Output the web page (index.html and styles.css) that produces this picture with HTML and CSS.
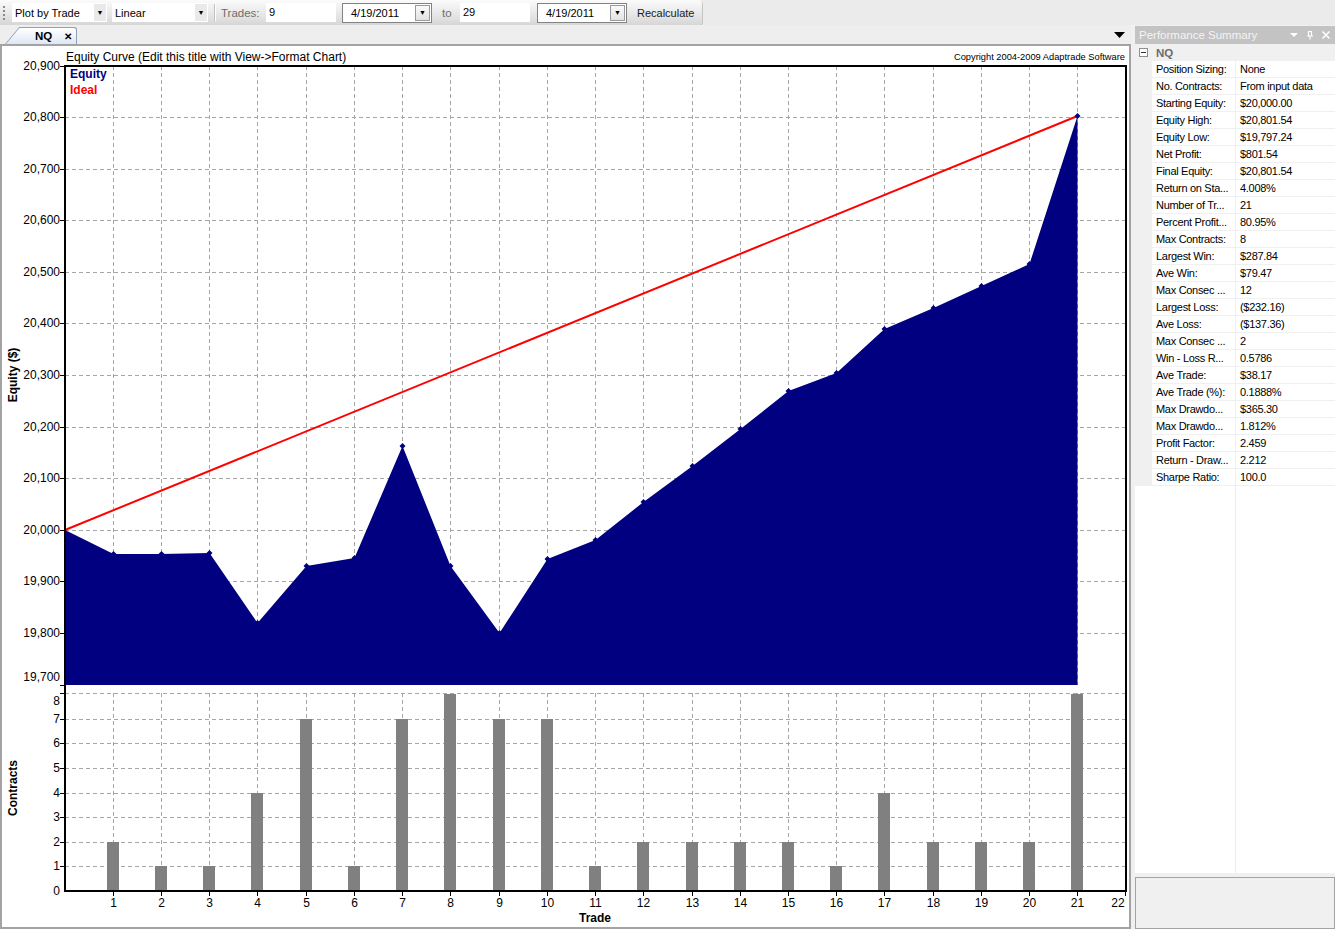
FILE: index.html
```html
<!DOCTYPE html>
<html>
<head>
<meta charset="utf-8">
<link rel="stylesheet" href="styles.css">
</head>
<body>
<div class="topbar">
  <div class="toolbar">
    <span class="grip"></span>
    <div class="combo c1"><span class="ctext">Plot by Trade</span><span class="carrow">▼</span></div>
    <div class="combo c2"><span class="ctext">Linear</span><span class="carrow">▼</span></div>
    <span class="tsep"></span>
    <span class="tlabel lab-trades">Trades:</span>
    <div class="tinput">9</div>
    <div class="dcombo d1"><span class="ctext">4/19/2011</span><span class="darrow">▼</span></div>
    <span class="tlabel lab-to">to</span>
    <div class="tinput">29</div>
    <div class="dcombo d2"><span class="ctext">4/19/2011</span><span class="darrow">▼</span></div>
    <span class="tbtn">Recalculate</span>
  </div>
</div>
<div class="main">
  <div class="doc">
    <div class="tabbar">
      <div class="tab"><span class="tabname">NQ</span><span class="tabx">✕</span></div>
      <svg class="tabmenu" width="11" height="7" viewBox="0 0 11 7"><path d="M0 0h11L5.5 6z" fill="#000"/></svg>
    </div>
    <div class="chartwrap">
      <svg class="chart" width="1127" height="880" viewBox="2 46 1127 880" xmlns="http://www.w3.org/2000/svg">
        <rect x="2" y="46" width="1127" height="880" fill="#fff"/>
        <text class="title" x="66" y="61">Equity Curve (Edit this title with View-&gt;Format Chart)</text>
        <text class="copy" x="1125" y="60" text-anchor="end">Copyright 2004-2009 Adaptrade Software</text>
        <!-- grid -->
        <path class="grid" d="M65 117.5H1126M65 169.5H1126M65 220.5H1126M65 272.5H1126M65 323.5H1126M65 375.5H1126M65 427.5H1126M65 478.5H1126M65 530.5H1126M65 581.5H1126M65 633.5H1126M65 693.5H1126M65 719.5H1126M65 743.5H1126M65 768.5H1126M65 793.5H1126M65 817.5H1126M65 842.5H1126M65 866.5H1126"/>
        <path class="grid" d="M113.5 66V685M161.5 66V685M209.5 66V685M257.5 66V685M306.5 66V685M354.5 66V685M402.5 66V685M450.5 66V685M499.5 66V685M547.5 66V685M595.5 66V685M643.5 66V685M692.5 66V685M740.5 66V685M788.5 66V685M836.5 66V685M884.5 66V685M933.5 66V685M981.5 66V685M1029.5 66V685M1077.5 66V685"/>
        <path class="grid" d="M113.5 693V891M161.5 693V891M209.5 693V891M257.5 693V891M306.5 693V891M354.5 693V891M402.5 693V891M450.5 693V891M499.5 693V891M547.5 693V891M595.5 693V891M643.5 693V891M692.5 693V891M740.5 693V891M788.5 693V891M836.5 693V891M884.5 693V891M933.5 693V891M981.5 693V891M1029.5 693V891M1077.5 693V891"/>
        <!-- equity fill -->
        <path fill="#000080" d="M65 685L65 530L113.5 554L161.5 554L209.5 553L257.5 623L306.5 566L354.5 558L402.5 446L450.5 566L499.5 633L547.5 559L595.5 540L643.5 502L692.5 466L740.5 429L788.5 391L836.5 373L884.5 329L933.5 308L981.5 286L1029.5 264L1077.5 116L1077.5 685Z"/>
        <!-- ideal -->
        <line x1="65" y1="530" x2="1077.5" y2="116" stroke="#ff0000" stroke-width="2"/>
        <!-- markers -->
        <path fill="#000080" d="M113.5 551l3 3-3 3-3-3zM161.5 551l3 3-3 3-3-3zM209.5 550l3 3-3 3-3-3zM257.5 620l3 3-3 3-3-3zM306.5 563l3 3-3 3-3-3zM354.5 555l3 3-3 3-3-3zM402.5 443l3 3-3 3-3-3zM450.5 563l3 3-3 3-3-3zM499.5 630l3 3-3 3-3-3zM547.5 556l3 3-3 3-3-3zM595.5 537l3 3-3 3-3-3zM643.5 499l3 3-3 3-3-3zM692.5 463l3 3-3 3-3-3zM740.5 426l3 3-3 3-3-3zM788.5 388l3 3-3 3-3-3zM836.5 370l3 3-3 3-3-3zM884.5 326l3 3-3 3-3-3zM933.5 305l3 3-3 3-3-3zM981.5 283l3 3-3 3-3-3zM1029.5 261l3 3-3 3-3-3zM1077.5 113l3 3-3 3-3-3z"/>
        <!-- bars -->
        <g fill="#808080">
          <rect x="107" y="842" width="12" height="49"/>
          <rect x="155" y="866" width="12" height="25"/>
          <rect x="203" y="866" width="12" height="25"/>
          <rect x="251" y="793" width="12" height="98"/>
          <rect x="300" y="719" width="12" height="172"/>
          <rect x="348" y="866" width="12" height="25"/>
          <rect x="396" y="719" width="12" height="172"/>
          <rect x="444" y="694" width="12" height="197"/>
          <rect x="493" y="719" width="12" height="172"/>
          <rect x="541" y="719" width="12" height="172"/>
          <rect x="589" y="866" width="12" height="25"/>
          <rect x="637" y="842" width="12" height="49"/>
          <rect x="686" y="842" width="12" height="49"/>
          <rect x="734" y="842" width="12" height="49"/>
          <rect x="782" y="842" width="12" height="49"/>
          <rect x="830" y="866" width="12" height="25"/>
          <rect x="878" y="793" width="12" height="98"/>
          <rect x="927" y="842" width="12" height="49"/>
          <rect x="975" y="842" width="12" height="49"/>
          <rect x="1023" y="842" width="12" height="49"/>
          <rect x="1071" y="694" width="12" height="197"/>
        </g>
        <!-- axes -->
        <path class="axis" d="M65 65V892M64 66H1127M1126 65V892M64 891H1127"/>
        <path class="tick" d="M60 66.5H65M60 117.5H65M60 169.5H65M60 220.5H65M60 272.5H65M60 323.5H65M60 375.5H65M60 427.5H65M60 478.5H65M60 530.5H65M60 581.5H65M60 633.5H65M60 685.5H65M60 693.5H65M60 719.5H65M60 743.5H65M60 768.5H65M60 793.5H65M60 817.5H65M60 842.5H65M60 866.5H65M113.5 891V896M161.5 891V896M209.5 891V896M257.5 891V896M306.5 891V896M354.5 891V896M402.5 891V896M450.5 891V896M499.5 891V896M547.5 891V896M595.5 891V896M643.5 891V896M692.5 891V896M740.5 891V896M788.5 891V896M836.5 891V896M884.5 891V896M933.5 891V896M981.5 891V896M1029.5 891V896M1077.5 891V896M1125.5 891V896"/>
        <!-- legend -->
        <text class="leg leg-eq" x="70" y="78">Equity</text>
        <text class="leg leg-id" x="70" y="94">Ideal</text>
        <!-- y labels -->
        <g class="ylab" text-anchor="end">
          <text x="60" y="70">20,900</text>
          <text x="60" y="121">20,800</text>
          <text x="60" y="173">20,700</text>
          <text x="60" y="224">20,600</text>
          <text x="60" y="276">20,500</text>
          <text x="60" y="327">20,400</text>
          <text x="60" y="379">20,300</text>
          <text x="60" y="431">20,200</text>
          <text x="60" y="482">20,100</text>
          <text x="60" y="534">20,000</text>
          <text x="60" y="585">19,900</text>
          <text x="60" y="637">19,800</text>
          <text x="60" y="681">19,700</text>
          <text x="60" y="705">8</text>
          <text x="60" y="723">7</text>
          <text x="60" y="747">6</text>
          <text x="60" y="772">5</text>
          <text x="60" y="797">4</text>
          <text x="60" y="821">3</text>
          <text x="60" y="846">2</text>
          <text x="60" y="870">1</text>
          <text x="60" y="895">0</text>
        </g>
        <g class="xlab" text-anchor="middle">
          <text x="113.5" y="907">1</text>
          <text x="161.5" y="907">2</text>
          <text x="209.5" y="907">3</text>
          <text x="257.5" y="907">4</text>
          <text x="306.5" y="907">5</text>
          <text x="354.5" y="907">6</text>
          <text x="402.5" y="907">7</text>
          <text x="450.5" y="907">8</text>
          <text x="499.5" y="907">9</text>
          <text x="547.5" y="907">10</text>
          <text x="595.5" y="907">11</text>
          <text x="643.5" y="907">12</text>
          <text x="692.5" y="907">13</text>
          <text x="740.5" y="907">14</text>
          <text x="788.5" y="907">15</text>
          <text x="836.5" y="907">16</text>
          <text x="884.5" y="907">17</text>
          <text x="933.5" y="907">18</text>
          <text x="981.5" y="907">19</text>
          <text x="1029.5" y="907">20</text>
          <text x="1077.5" y="907">21</text>
          <text x="1118" y="907">22</text>
        </g>
        <text class="atitle" x="595" y="922" text-anchor="middle">Trade</text>
        <text class="atitle" transform="translate(17,375) rotate(-90)" text-anchor="middle">Equity ($)</text>
        <text class="atitle" transform="translate(17,788) rotate(-90)" text-anchor="middle">Contracts</text>
      </svg>
    </div>
  </div>
  <div class="side">
    <div class="sidehead">
      <span class="shtitle">Performance Summary</span>
      <span class="shicons">
        <svg width="10" height="10" viewBox="0 0 10 10"><path d="M1 3h8L5 7z" fill="#fff"/></svg>
        <svg width="10" height="10" viewBox="0 0 10 10"><path d="M3 1.5h4M3.5 1.5v4.5M6.5 1.5v4.5M2 6h6M5 6v3.5" stroke="#fff" stroke-width="1.2" fill="none"/></svg>
        <svg width="10" height="10" viewBox="0 0 10 10"><path d="M1.5 1.5l7 7M8.5 1.5l-7 7" stroke="#fff" stroke-width="1.6"/></svg>
      </span>
    </div>
    <div class="cat">
      <span class="catbox"><svg width="9" height="9" viewBox="0 0 9 9"><rect x="0.5" y="0.5" width="8" height="8" fill="#fff" stroke="#8e8e8e"/><path d="M2 4.5h5" stroke="#333"/></svg></span>
      <span class="catname">NQ</span>
    </div>
    <div class="rows">
      <div class="row"><span class="g"></span><span class="k">Position Sizing:</span><span class="v">None</span></div>
      <div class="row"><span class="g"></span><span class="k">No. Contracts:</span><span class="v">From input data</span></div>
      <div class="row"><span class="g"></span><span class="k">Starting Equity:</span><span class="v">$20,000.00</span></div>
      <div class="row"><span class="g"></span><span class="k">Equity High:</span><span class="v">$20,801.54</span></div>
      <div class="row"><span class="g"></span><span class="k">Equity Low:</span><span class="v">$19,797.24</span></div>
      <div class="row"><span class="g"></span><span class="k">Net Profit:</span><span class="v">$801.54</span></div>
      <div class="row"><span class="g"></span><span class="k">Final Equity:</span><span class="v">$20,801.54</span></div>
      <div class="row"><span class="g"></span><span class="k">Return on Sta...</span><span class="v">4.008%</span></div>
      <div class="row"><span class="g"></span><span class="k">Number of Tr...</span><span class="v">21</span></div>
      <div class="row"><span class="g"></span><span class="k">Percent Profit...</span><span class="v">80.95%</span></div>
      <div class="row"><span class="g"></span><span class="k">Max Contracts:</span><span class="v">8</span></div>
      <div class="row"><span class="g"></span><span class="k">Largest Win:</span><span class="v">$287.84</span></div>
      <div class="row"><span class="g"></span><span class="k">Ave Win:</span><span class="v">$79.47</span></div>
      <div class="row"><span class="g"></span><span class="k">Max Consec ...</span><span class="v">12</span></div>
      <div class="row"><span class="g"></span><span class="k">Largest Loss:</span><span class="v">($232.16)</span></div>
      <div class="row"><span class="g"></span><span class="k">Ave Loss:</span><span class="v">($137.36)</span></div>
      <div class="row"><span class="g"></span><span class="k">Max Consec ...</span><span class="v">2</span></div>
      <div class="row"><span class="g"></span><span class="k">Win - Loss R...</span><span class="v">0.5786</span></div>
      <div class="row"><span class="g"></span><span class="k">Ave Trade:</span><span class="v">$38.17</span></div>
      <div class="row"><span class="g"></span><span class="k">Ave Trade (%):</span><span class="v">0.1888%</span></div>
      <div class="row"><span class="g"></span><span class="k">Max Drawdo...</span><span class="v">$365.30</span></div>
      <div class="row"><span class="g"></span><span class="k">Max Drawdo...</span><span class="v">1.812%</span></div>
      <div class="row"><span class="g"></span><span class="k">Profit Factor:</span><span class="v">2.459</span></div>
      <div class="row"><span class="g"></span><span class="k">Return - Draw...</span><span class="v">2.212</span></div>
      <div class="row"><span class="g"></span><span class="k">Sharpe Ratio:</span><span class="v">100.0</span></div>
    </div>
    <div class="gridfill"></div>
    <div class="desc"></div>
  </div>
</div>
</body>
</html>
```

FILE: styles.css
```css
html, body {
  margin: 0;
  padding: 0;
}
body {
  width: 1335px;
  height: 929px;
  overflow: hidden;
  background: #f0f0f0;
  font-family: "Liberation Sans", Arial, sans-serif;
  font-size: 11px;
  color: #000;
}

/* ---------- toolbar ---------- */
.topbar {
  height: 25px;
  background: #ebebeb;
  display: flex;
}
.toolbar {
  width: 702px;
  height: 25px;
  box-sizing: border-box;
  display: flex;
  align-items: center;
  background: linear-gradient(#fbfbfb, #e6e6e6 60%, #d6d6d6);
  border-radius: 0 4px 4px 0;
  box-shadow: 1px 1px 0 #c4c4c4;
}
.grip {
  width: 2px;
  height: 14px;
  margin-left: 3px;
  background: repeating-linear-gradient(#8a8a8a 0 2px, transparent 2px 4px);
}
.combo {
  height: 19px;
  background: #fff;
  display: flex;
  align-items: center;
  justify-content: space-between;
  box-sizing: border-box;
  padding-left: 3px;
}
.c1 { margin-left: 7px; width: 95px; }
.c2 { margin-left: 5px; width: 96px; }
.carrow {
  width: 12px;
  height: 17px;
  margin-right: 1px;
  background: #e9e9e9;
  font-size: 7px;
  display: flex;
  align-items: center;
  justify-content: center;
}
.tsep {
  width: 1px;
  height: 17px;
  margin-left: 6px;
  background: #c0c0c0;
  box-shadow: 1px 0 0 #fff;
}
.tlabel {
  color: #6d6d6d;
  font-size: 11.5px;
}
.lab-trades { margin-left: 6px; width: 45px; }
.lab-to { margin-left: 10px; width: 18px; }
.tinput {
  width: 70px;
  height: 19px;
  background: #fff;
  box-sizing: border-box;
  padding-left: 3px;
  line-height: 19px;
}
.dcombo {
  width: 90px;
  height: 20px;
  background: #fff;
  border: 1px solid #828282;
  box-sizing: border-box;
  display: flex;
  align-items: center;
  justify-content: space-between;
  padding-left: 8px;
}
.d1 { margin-left: 6px; }
.d2 { margin-left: 7px; }
.darrow {
  width: 13px;
  height: 14px;
  margin-right: 1px;
  border: 1px solid #9a9a9a;
  background: linear-gradient(#fafafa, #e2e2e2);
  font-size: 7px;
  display: flex;
  align-items: center;
  justify-content: center;
}
.tbtn {
  margin-left: 10px;
  color: #1a1a1a;
}

/* ---------- main ---------- */
.main {
  display: flex;
  height: 904px;
}
.doc {
  width: 1131px;
  display: flex;
  flex-direction: column;
}
.tabbar {
  height: 21px;
  box-sizing: border-box;
  border-bottom: 2px solid #a3a3a3;
  display: flex;
  align-items: flex-end;
  justify-content: space-between;
  background: #eeeeee;
}
.tab {
  position: relative;
  z-index: 0;
  margin-left: 20px;
  width: 57px;
  height: 17px;
  box-sizing: border-box;
  background: linear-gradient(#ffffff, #dde7f4);
  border-top: 1px solid #8fa0b8;
  border-right: 1px solid #8fa0b8;
  border-radius: 0 3px 0 0;
  display: flex;
  align-items: center;
}
.tab::before {
  content: "";
  position: absolute;
  z-index: -1;
  left: -15px;
  top: -1px;
  bottom: 0;
  width: 20px;
  background: linear-gradient(#ffffff, #dde7f4);
  border-left: 1px solid #8fa0b8;
  border-top: 1px solid #8fa0b8;
  transform: skewX(-40deg);
  transform-origin: bottom left;
}
.tabname {
  margin-left: 15px;
  font-weight: bold;
  font-size: 11.5px;
}
.tabx {
  margin-left: 12px;
  font-size: 10px;
  font-weight: bold;
}
.tabmenu {
  display: block;
  margin-right: 6px;
  margin-bottom: 5px;
}
.chartwrap {
  flex: 1;
  border-left: 2px solid #a3a3a3;
  border-right: 2px solid #a3a3a3;
  border-bottom: 2px solid #a3a3a3;
  background: #fff;
  overflow: hidden;
}
.chart {
  display: block;
  font-family: "Liberation Sans", Arial, sans-serif;
}
.chart text { font-size: 12px; fill: #000; }
.chart .copy { font-size: 9.3px; }
.chart .leg { font-weight: bold; }
.chart .leg-eq { fill: #000080; }
.chart .leg-id { fill: #ff0000; }
.chart .atitle { font-weight: bold; }
.chart .grid {
  stroke: #a6a6a6;
  stroke-width: 1;
  stroke-dasharray: 4 3;
  fill: none;
}
.chart .axis {
  stroke: #000;
  stroke-width: 2;
  fill: none;
}
.chart .tick {
  stroke: #000;
  stroke-width: 1;
  fill: none;
}

/* ---------- side panel ---------- */
.side {
  width: 200px;
  margin-left: 4px;
  display: flex;
  flex-direction: column;
  padding-top: 1px;
}
.sidehead {
  height: 18px;
  background: #c3c3c3;
  color: #f4f4f4;
  display: flex;
  align-items: center;
  justify-content: space-between;
  padding-left: 4px;
  font-size: 11.5px;
}
.shicons {
  display: flex;
  gap: 6px;
  margin-right: 4px;
}
.shicons svg { display: block; }
.cat {
  height: 17px;
  background: #f0f0f0;
  display: flex;
  align-items: center;
}
.catbox {
  width: 17px;
  display: flex;
  justify-content: center;
}
.catbox svg { display: block; }
.catname {
  margin-left: 4px;
  font-weight: bold;
  color: #6d6d6d;
  font-size: 11.5px;
}
.rows {
  background: #fff;
}
.row {
  display: flex;
  height: 17px;
}
.g {
  width: 17px;
  background: #f0f0f0;
}
.k, .v {
  box-sizing: border-box;
  height: 17px;
  line-height: 17px;
  border-bottom: 1px solid #f0f0f0;
  padding-left: 4px;
  letter-spacing: -0.3px;
  white-space: nowrap;
  overflow: hidden;
}
.k {
  width: 83px;
}
.v {
  flex: 1;
  border-left: 1px solid #f0f0f0;
}
.gridfill {
  flex: 1;
  background: linear-gradient(90deg, #fff 100px, #ececec 100px, #ececec 101px, #fff 101px);
  margin-bottom: 4px;
}
.desc {
  height: 52px;
  box-sizing: border-box;
  border: 1px solid #a3a3a3;
  background: #f0f0f0;
}
```
